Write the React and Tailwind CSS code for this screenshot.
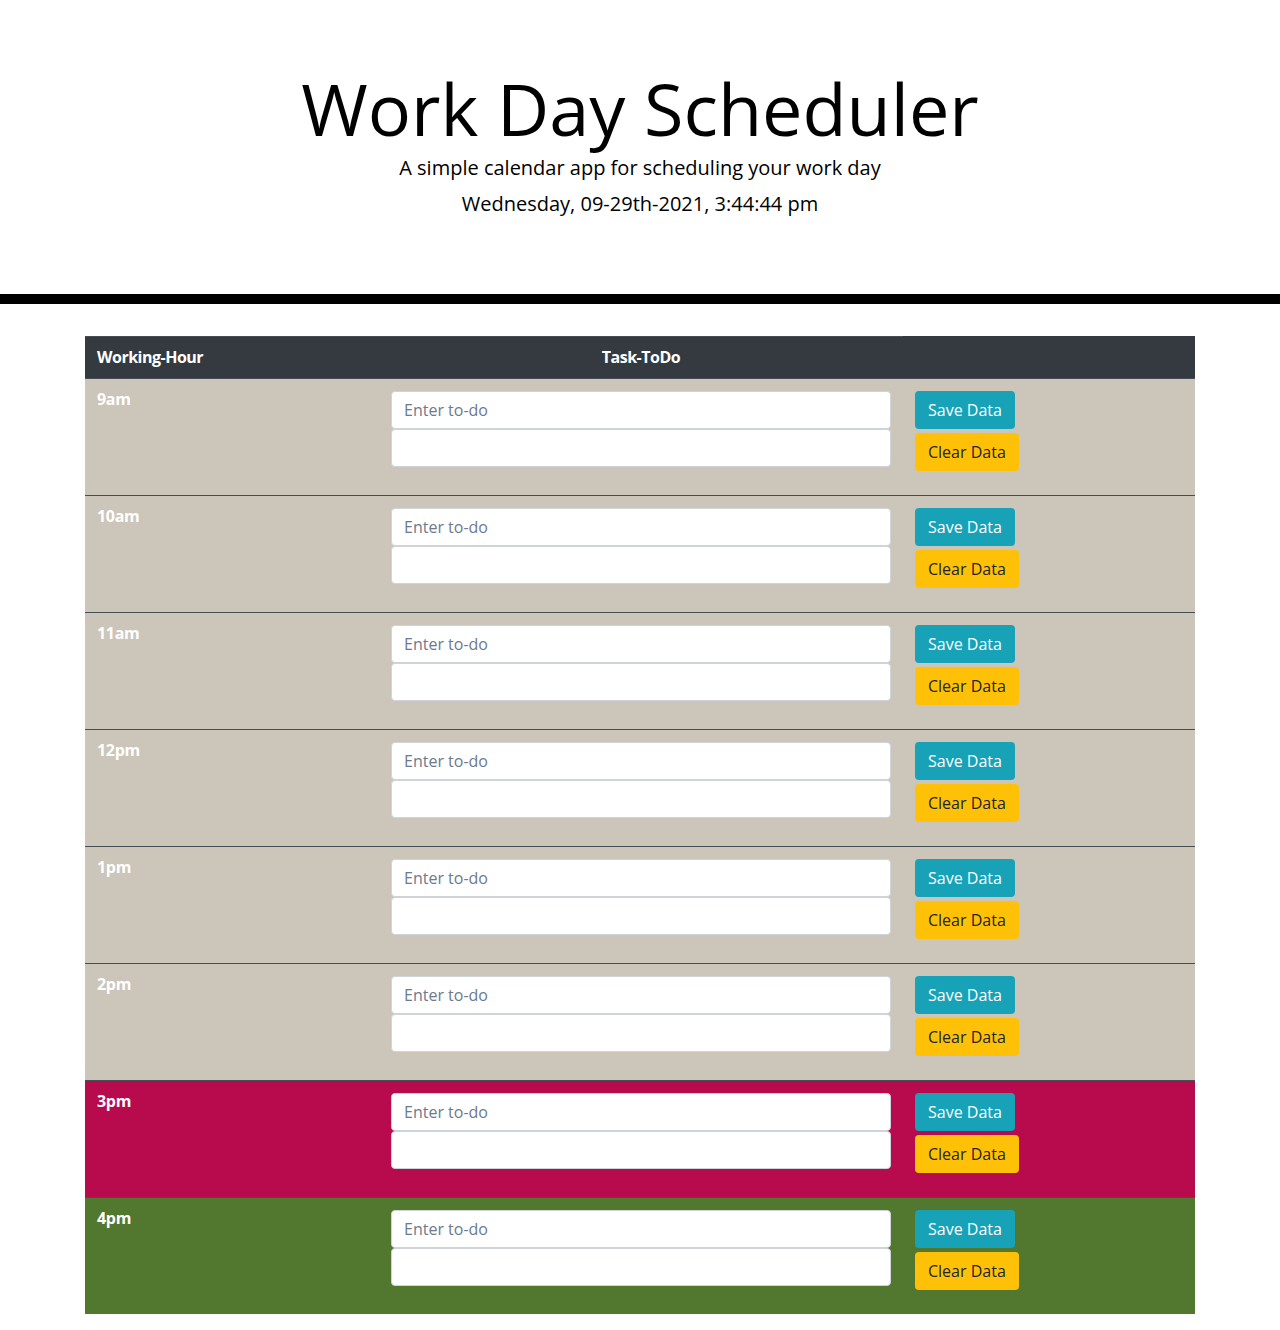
import React from 'react';

const hours = [
  { label: '9am', bg: 'bg-[#ccc5b9]' },
  { label: '10am', bg: 'bg-[#ccc5b9]' },
  { label: '11am', bg: 'bg-[#ccc5b9]' },
  { label: '12pm', bg: 'bg-[#ccc5b9]' },
  { label: '1pm', bg: 'bg-[#ccc5b9]' },
  { label: '2pm', bg: 'bg-[#ccc5b9]' },
  { label: '3pm', bg: 'bg-[#b80b4d]' },
  { label: '4pm', bg: 'bg-[#52772f]' },
];

function HourRow({ label, bg, first }) {
  return (
    <div className={`flex ${bg} ${first ? 'h-[116px]' : 'h-[117px] border-t border-[#454d55]'}`}>
      <div className="w-[294px] px-3 pt-[8px] text-white font-bold text-base leading-6 tracking-[-0.3px]">{label}</div>
      <div className="w-[524px] px-3 pt-3 flex flex-col">
        <input
          type="text"
          placeholder="Enter to-do"
          className="h-[38px] w-full bg-white border border-[#ced4da] rounded px-3 text-base text-[#495057] placeholder:text-[#6c7a8d] outline-none"
        />
        <textarea className="h-[38px] w-full bg-white border border-[#ced4da] rounded px-3 text-base resize-none outline-none" />
      </div>
      <div className="flex-1 px-3 pt-3 flex flex-col items-start gap-[4px]">
        <button className="h-[38px] px-[13px] bg-[#17a2b8] text-white rounded text-base leading-6">Save Data</button>
        <button className="h-[38px] px-[13px] bg-[#ffc107] text-[#212529] rounded text-base leading-6">Clear Data</button>
      </div>
    </div>
  );
}

export default function App() {
  return (
    <div className="min-h-screen bg-white text-[#212529]" style={{ fontFamily: '"Open Sans", sans-serif' }}>
      <header className="pt-[65px] h-[304px] text-center border-b-[10px] border-black">
        <h1 className="text-[72px] leading-[1.2] font-normal text-black">Work Day Scheduler</h1>
        <p className="text-xl leading-[1.5] mt-[2px] text-black">A simple calendar app for scheduling your work day</p>
        <p className="text-xl leading-[1.5] mt-[6px] text-black">Wednesday, 09-29th-2021, 3:44:44 pm</p>
      </header>

      <main className="w-[1110px] mx-auto pt-[32px] pb-4">
        <div className="flex h-[43px] bg-[#343a40] text-white font-bold text-base border-b border-[#454d55] tracking-[-0.5px]">
          <div className="w-[294px] px-3 pb-[2px] flex items-center border-t border-[#454d55]">Working-Hour</div>
          <div className="w-[524px] px-3 pb-[2px] flex items-center justify-center border-t border-[#454d55]">Task-ToDo</div>
          <div className="flex-1"></div>
        </div>
        {hours.map((h, i) => (
          <HourRow key={h.label} label={h.label} bg={h.bg} first={i === 0} />
        ))}
      </main>
    </div>
  );
}
